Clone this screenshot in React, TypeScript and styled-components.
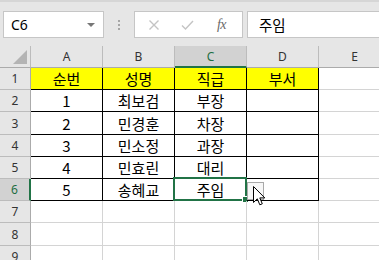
import React from "react";
import styled, { createGlobalStyle, css } from "styled-components";

const GlobalStyle = createGlobalStyle`
  html, body { margin: 0; padding: 0; background: #ffffff; overflow: hidden; }
  body { font-family: "Noto Sans", "Noto Sans CJK KR", sans-serif; }
`;

const Page = styled.div`
  width: 379px;
  height: 260px;
  overflow: hidden;
  position: relative;
`;

const Toolbar = styled.div`
  height: 46px;
  box-sizing: border-box;
  background: #e6e6e6;
  border-top: 2px solid #d6d6d6;
  display: flex;
  align-items: flex-start;
  padding: 9px 0 0 3px;
`;

const NameBox = styled.div`
  width: 101px;
  height: 27px;
  box-sizing: border-box;
  background: #ffffff;
  border: 1px solid #c6c6c6;
  display: flex;
  align-items: center;
  justify-content: space-between;
  padding: 0 8px 0 7px;
  font-size: 14px;
  color: #000;
`;

const Caret = styled.span`
  width: 0;
  height: 0;
  border-left: 4px solid transparent;
  border-right: 4px solid transparent;
  border-top: 4px solid #777;
`;

const Dots = styled.div`
  width: 30px;
  height: 27px;
  display: flex;
  flex-direction: column;
  align-items: center;
  justify-content: center;
  gap: 2px;
  span {
    width: 2px;
    height: 2px;
    background: #a6a6a6;
  }
`;

const FxGroup = styled.div`
  width: 109px;
  height: 27px;
  box-sizing: border-box;
  background: #ffffff;
  border: 1px solid #c6c6c6;
  display: flex;
  align-items: center;
`;

const FxButton = styled.span<{ $muted?: boolean; $w: number }>`
  width: ${(p) => p.$w}px;
  display: flex;
  justify-content: center;
  align-items: center;
  color: ${(p) => (p.$muted ? "#c4c4c4" : "#6a6a6a")};
`;

const FxText = styled.span`
  font-family: "Liberation Serif", "DejaVu Serif", serif;
  font-style: italic;
  font-size: 14px;
  color: #6a6a6a;
  letter-spacing: -0.5px;
`;

const FormulaInput = styled.div`
  flex: 1;
  height: 27px;
  margin-left: 4px;
  margin-right: -4px;
  box-sizing: border-box;
  background: #ffffff;
  border: 1px solid #c6c6c6;
  display: flex;
  align-items: center;
  padding-left: 11px;
  font-family: "Noto Sans CJK KR", sans-serif;
  font-size: 14.5px;
  color: #000;
`;

const Sheet = styled.div`
  position: relative;
  display: grid;
  grid-template-columns: 31px repeat(5, 72px);
  grid-template-rows: 22px 22px 22px 23px 22px 22px 22px 22px 23px 22px;
`;

const Corner = styled.div`
  background: #e6e6e6;
  box-sizing: border-box;
  border-right: 1px solid #bcbcbc;
  border-bottom: 1px solid #ababab;
  position: relative;
  &::after {
    content: "";
    position: absolute;
    right: 3px;
    bottom: 3px;
    width: 0;
    height: 0;
    border-left: 14px solid transparent;
    border-bottom: 14px solid #b4b4b4;
  }
`;

const ColHead = styled.div<{ $sel?: boolean }>`
  box-sizing: border-box;
  background: ${(p) => (p.$sel ? "#d2d2d2" : "#e6e6e6")};
  border-right: 1px solid #bcbcbc;
  border-bottom: ${(p) => (p.$sel ? "2px solid #217346" : "1px solid #ababab")};
  display: flex;
  align-items: center;
  justify-content: center;
  font-size: 12px;
  color: ${(p) => (p.$sel ? "#1e6e42" : "#333")};
  padding-top: ${(p) => (p.$sel ? "1px" : "0")};
`;

const RowHead = styled.div<{ $sel?: boolean }>`
  box-sizing: border-box;
  background: ${(p) => (p.$sel ? "#d2d2d2" : "#e6e6e6")};
  border-right: ${(p) => (p.$sel ? "2px solid #217346" : "1px solid #ababab")};
  border-bottom: 1px solid #bcbcbc;
  display: flex;
  align-items: center;
  justify-content: center;
  font-size: 12px;
  color: ${(p) => (p.$sel ? "#1e6e42" : "#333")};
`;

const Cell = styled.div<{ $table?: boolean; $header?: boolean }>`
  position: relative;
  box-sizing: border-box;
  border-right: 1px solid #d4d4d4;
  border-bottom: 1px solid #d4d4d4;
  display: flex;
  align-items: center;
  justify-content: center;
  font-family: "Noto Sans CJK KR", sans-serif;
  font-size: 15px;
  color: #000;
  ${(p) =>
    p.$table &&
    css`
      border-right-color: #000;
      border-bottom-color: #000;
    `}
  ${(p) =>
    p.$header &&
    css`
      background: #ffff00;
    `}
`;

const Selection = styled.div`
  position: absolute;
  top: -2px;
  left: -2px;
  right: -1px;
  bottom: -1px;
  border: 2px solid #217346;
  pointer-events: none;
`;

const FillHandle = styled.div`
  position: absolute;
  right: -4px;
  bottom: -4px;
  width: 5px;
  height: 5px;
  background: #217346;
  border: 1px solid #ffffff;
`;

const HintBox = styled.div`
  position: absolute;
  left: 247px;
  top: 136px;
  width: 17px;
  height: 18px;
  box-sizing: border-box;
  border: 1px solid #a9a9a9;
  background: #f7f7f7;
`;

const Pointer = styled.svg`
  position: absolute;
  left: 253px;
  top: 140px;
`;

const columns = ["A", "B", "C", "D", "E"];
const tableData: string[][] = [
  ["순번", "성명", "직급", "부서"],
  ["1", "최보검", "부장", ""],
  ["2", "민경훈", "차장", ""],
  ["3", "민소정", "과장", ""],
  ["4", "민효린", "대리", ""],
  ["5", "송혜교", "주임", ""],
];

export default function App() {
  const rows = 9;
  return (
    <Page>
      <GlobalStyle />
      <Toolbar>
        <NameBox>
          <span>C6</span>
          <Caret />
        </NameBox>
        <Dots>
          <span />
          <span />
          <span />
        </Dots>
        <FxGroup>
          <FxButton $muted $w={38}>
            <svg width="12" height="12" viewBox="0 0 12 12">
              <path d="M1.5 1.5 L10.5 10.5 M10.5 1.5 L1.5 10.5" stroke="#c4c4c4" strokeWidth="1.4" fill="none" />
            </svg>
          </FxButton>
          <FxButton $muted $w={28}>
            <svg width="13" height="12" viewBox="0 0 13 12">
              <path d="M1 6.5 L4.5 10 L12 2" stroke="#c4c4c4" strokeWidth="1.4" fill="none" />
            </svg>
          </FxButton>
          <FxButton $w={41}>
            <FxText>fx</FxText>
          </FxButton>
        </FxGroup>
        <FormulaInput>주임</FormulaInput>
      </Toolbar>
      <Sheet>
        <Corner />
        {columns.map((c) => (
          <ColHead key={c} $sel={c === "C"}>
            {c}
          </ColHead>
        ))}
        {Array.from({ length: rows }, (_, r) => {
          const rowNo = r + 1;
          const data = tableData[r];
          return (
            <React.Fragment key={rowNo}>
              <RowHead $sel={rowNo === 6}>{rowNo}</RowHead>
              {columns.map((c, ci) => {
                const inTable = !!data && ci < 4;
                const value = inTable ? data[ci] : "";
                const selected = rowNo === 6 && c === "C";
                return (
                  <Cell key={c} $table={inTable} $header={inTable && rowNo === 1}>
                    {value}
                    {selected && (
                      <Selection>
                        <FillHandle />
                      </Selection>
                    )}
                  </Cell>
                );
              })}
            </React.Fragment>
          );
        })}
        <HintBox />
        <Pointer width="13" height="21" viewBox="0 0 13 21">
          <path
            d="M0.5 0.5 L0.5 16.5 L4.3 12.8 L6.8 18.8 L9.3 17.8 L6.8 11.9 L11.8 11.9 Z"
            fill="#ffffff"
            stroke="#000000"
            strokeWidth="1"
            strokeLinejoin="miter"
          />
        </Pointer>
      </Sheet>
    </Page>
  );
}
